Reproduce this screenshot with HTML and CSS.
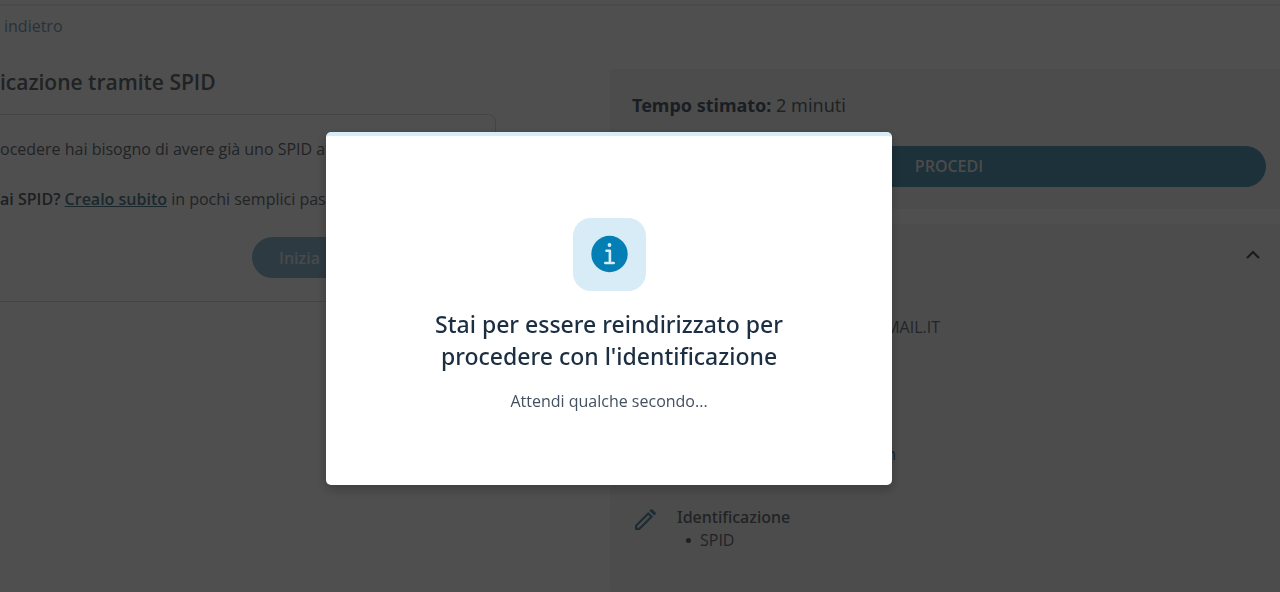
FILE: index.html
```html
<!DOCTYPE html>
<html lang="it">
<head>
<meta charset="utf-8">
<meta name="viewport" content="width=device-width, initial-scale=1">
<title>Identificazione tramite SPID</title>
<link rel="stylesheet" href="styles.css">
</head>
<body>
<div class="page">
  <nav class="topbar"><a class="back" href="#">indietro</a></nav>
  <div class="columns">
    <main class="content">
      <h1 class="title">icazione tramite SPID</h1>
      <section class="card">
        <p class="text">ocedere hai bisogno di avere già uno SPID attivo</p>
        <p class="text"><strong>ai SPID?</strong> <a class="link" href="#">Crealo subito</a> in pochi semplici passi</p>
        <button class="start" type="button">Inizia</button>
      </section>
    </main>
    <aside class="side">
      <section class="panel">
        <p class="time"><strong>Tempo stimato:</strong> 2 minuti</p>
        <button class="proceed" type="button">PROCEDI</button>
      </section>
      <section class="panel summary">
        <button class="toggle" type="button" aria-label="Chiudi riepilogo">
          <svg width="14" height="9" viewBox="0 0 14 9" fill="none" stroke="currentColor" stroke-width="2.2"><path d="M1 8l6-6 6 6"/></svg>
        </button>
        <p class="email">EMAIL.IT</p>
        <p class="edit"><a href="#">n</a></p>
        <div class="step">
          <svg class="pencil" width="24" height="24" viewBox="0 0 24 24" fill="currentColor"><path fill-rule="evenodd" d="M3 22v-4.800L16.300 3.900l4.800 4.800L7.800 22zM5.200 19.800h1.700L18 8.700 16.300 7 5.200 18.100zM17.400 2.800l1.300-1.300c.5-.5 1.200-.5 1.700 0L23.500 4.600c.5.5.5 1.200 0 1.700l-1.300 1.300z"/></svg>
          <div>
            <h2 class="step-title">Identificazione</h2>
            <ul class="list"><li>SPID</li></ul>
          </div>
        </div>
      </section>
    </aside>
  </div>
</div>
<div class="overlay">
  <div class="modal" role="dialog" aria-modal="true" aria-labelledby="modal-title">
    <div class="badge">
      <svg width="38" height="38" viewBox="0 0 38 38"><circle cx="19.500" cy="19" r="18.200" fill="#037fb5"/><circle cx="19.500" cy="10" r="1.900" fill="#d7ecf7"/><path d="M16.500 15.800h3.400V28M15.300 28h8.400" fill="none" stroke="#d7ecf7" stroke-width="2.600" stroke-linecap="round" stroke-linejoin="round"/></svg>
    </div>
    <h2 class="modal-title" id="modal-title">Stai per essere reindirizzato per procedere con l'identificazione</h2>
    <p class="modal-text">Attendi qualche secondo...</p>
  </div>
</div>
</body>
</html>
```
FILE: styles.css
```css
* { box-sizing: border-box; }
body { margin: 0; background: #fff; color: #71767d; font: 16px/24px "Open Sans", sans-serif; overflow: hidden; }
h1, h2, p, ul { margin: 0; padding: 0; }
button { font: inherit; border: 0; cursor: pointer; }
strong { font-weight: 600; }

.page { min-height: 100vh; overflow: hidden; }
.topbar { margin-top: 4px; border-top: 2px solid #eee; padding: 8px 4px; }
.back { color: #7ca4b8; text-decoration: none; }
.columns { display: grid; grid-template-columns: 496fr 670fr; gap: 114px; padding-top: 23px; align-items: start; }

.title { font-family: "Open Sans", sans-serif; font-size: 21px; line-height: 28px; font-weight: 600; color: #686d75; margin: -1px 0 18px; }
.card { border: 1px solid #dcdcdc; border-left: 0; border-top-right-radius: 8px; padding: 22px 0 23px; display: grid; gap: 26px; }
.text { white-space: nowrap; font-weight: 370; color: #6c7279; }
.text strong { color: #5e656e; }
.link { color: #558296; font-weight: 600; }
.start { justify-self: end; width: 243px; height: 41px; padding: 0 27px; border-radius: 21px; background: #91bcd5; color: #e4ecf1; font-weight: 600; text-align: left; }

.side { display: grid; gap: 15px; }
.panel { background: #f5f5f5; border-radius: 4px 0 0 4px; padding: 22px; }
.side .panel:first-child { padding: 24px 14px 22px 22px; }
.time { font-family: "Noto Sans", sans-serif; font-size: 18px; margin-bottom: 29px; color: #686f77; }
.time strong { font-weight: 700; color: #556370; }
.proceed { width: 100%; height: 41px; padding: 0 0 2px; border-radius: 21px; background: #5a9dbb; color: #f0f0f0; font-weight: 600; }
.summary { padding: 19px 20px 37px 22px; min-height: 368px; }
.toggle { display: flex; margin-left: auto; padding: 7px 0; background: none; color: #515b66; }
.email, .edit { width: 308px; text-align: right; }
.email { margin-top: 49px; }
.edit { width: 264px; margin: 103px 0 40px; }
.edit a { color: #437c99; text-decoration: none; }
.step { display: flex; gap: 21px; }
.pencil { color: #5b8da4; margin-top: 2px; }
.step-title { font-family: "Noto Sans", sans-serif; font-size: 16px; line-height: 23px; font-weight: 500; color: #6b7078; }
.list { display: flex; padding-left: 9px; line-height: 23px; list-style: none; font-weight: 370; color: #6c7279; }
.list li { display: flex; align-items: center; gap: 9px; }
.list li::before { content: ""; width: 5px; height: 5px; border-radius: 50%; background: #5e656e; }

.overlay { position: fixed; inset: 0; background: rgba(0, 0, 0, .69); display: grid; place-items: center; padding: 24px 62px 0 0; }
.modal { width: 566px; max-width: 100%; background: #fff; border-top: 4px solid #d7ecf7; border-radius: 5px; padding: 82px 96px 72px; text-align: center; box-shadow: 0 4px 12px rgba(0, 0, 0, .25); }
.badge { width: 73px; height: 73px; margin: 0 auto 17px; display: grid; place-items: center; border-radius: 18px; background: #d7ecf7; }
.modal-title { font-family: "Noto Sans", sans-serif; font-size: 23px; line-height: 32px; font-weight: 500; color: #1c2f42; margin-bottom: 17px; }
.modal-text { font-weight: 370; color: #425060; }
```
